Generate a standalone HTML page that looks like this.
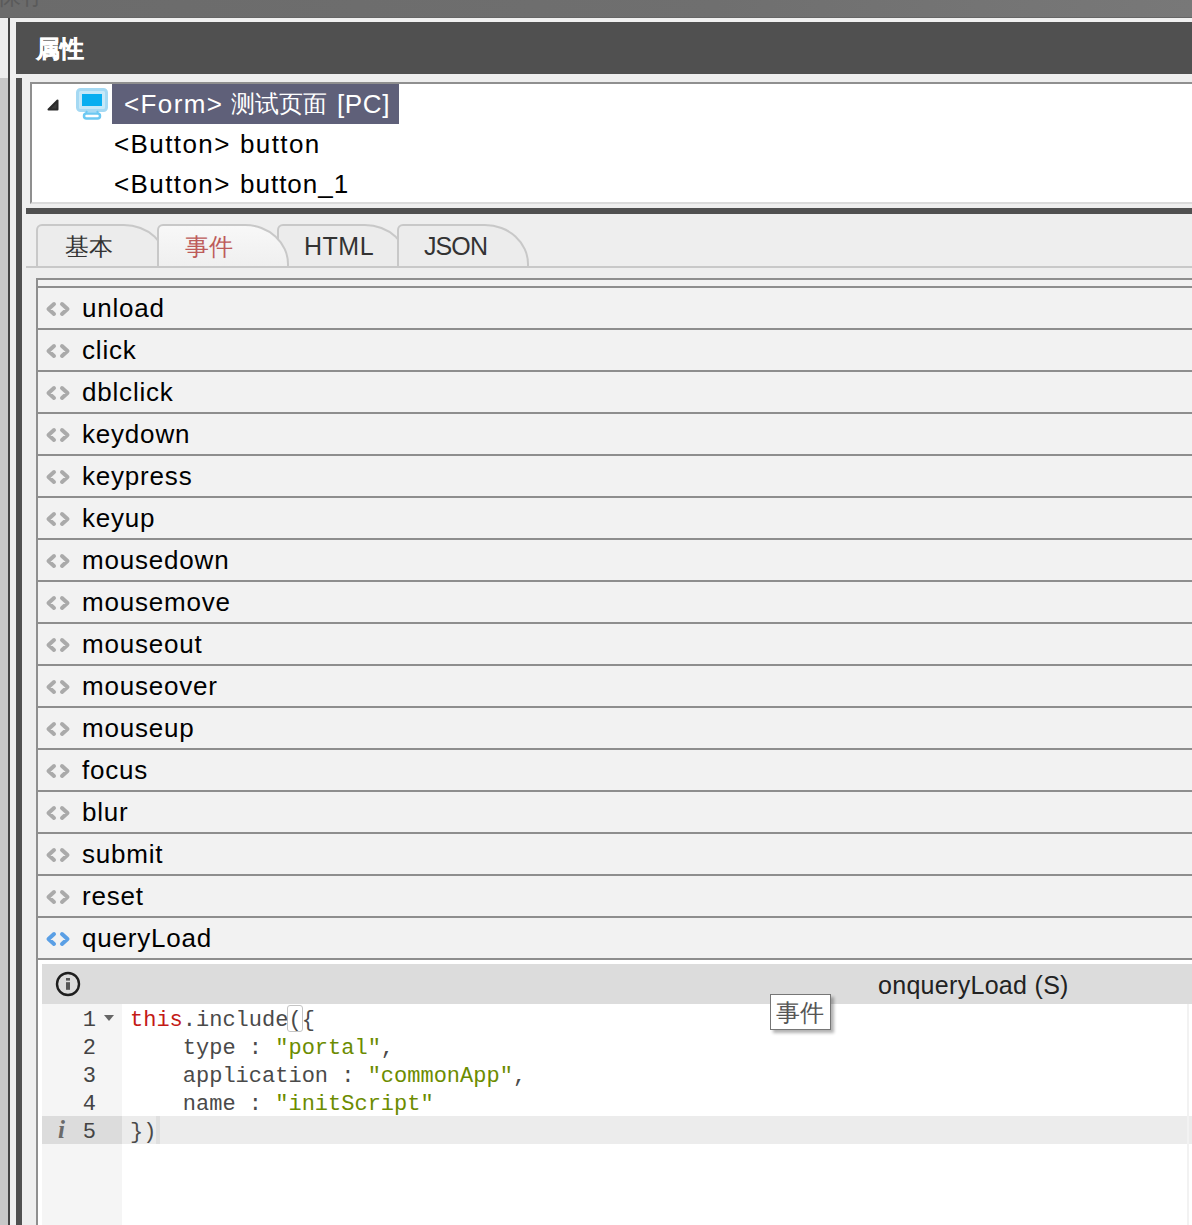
<!DOCTYPE html>
<html><head><meta charset="utf-8">
<style>
*{box-sizing:border-box}
html,body{margin:0;padding:0}
body{width:1192px;height:1225px;overflow:hidden;position:relative;background:#eeeeee;font-family:"Liberation Sans",sans-serif}
.a{position:absolute}
#topband{left:0;top:0;width:1192px;height:18px;border-bottom:1px solid #656565;background:linear-gradient(90deg,#6b6b6b 0%,#6f6f6f 60%,#787878 100%);overflow:hidden}
#topband span{position:absolute;left:-3px;top:-20px;font-size:24px;color:#5a5a5a}
.hdr{left:16px;top:22px;width:1176px;height:52px;background:#505050}
.hdr span{position:absolute;left:20px;top:12px;font-size:24px;font-weight:bold;color:#fff;line-height:30px;-webkit-text-stroke:0.35px #fff}
#tree{left:30px;top:82px;width:1200px;height:122px;background:#fff;border-top:2px solid #8f8f8f;border-left:2px solid #8f8f8f;border-bottom:2px solid #dadada}
.ti{position:absolute;font-size:26px;letter-spacing:1.4px;white-space:pre;line-height:40px;color:#000}
.ti.cj{font-size:24px;letter-spacing:0}
#sel{left:80px;top:0;width:287px;height:40px;background:#5f6079}
.tab{position:absolute;top:224px;height:43px;width:132px;border:2px solid #c8c8c8;border-bottom:none;border-radius:6px 44px 0 0 / 6px 40px 0 0;background:#ececec;font-size:24px;line-height:42px;padding-left:27px;color:#333}
.tab.act{background:linear-gradient(#f8f8f8,#efefef);color:#bd5b5a;z-index:5}
#tabline{left:26px;top:266px;width:1166px;height:2px;background:#c8c8c8;z-index:6}
#list{left:36px;top:278px;width:1200px;height:1000px;border-top:2px solid #8e8e8e;border-left:2px solid #8e8e8e;background:#f2f2f2}
.row{position:absolute;left:0;width:1200px;height:42px;border-top:2px solid #8e8e8e;background:#f2f2f2}
.row span{position:absolute;left:44px;top:0;font-size:26px;letter-spacing:0.8px;line-height:40px;color:#000}
.row svg{position:absolute;left:0;top:0}

#editor{left:38px;top:960px;width:1160px;height:265px;background:#fff}
.gut{position:absolute;left:4px;top:47px;width:54px;text-align:right;font-family:"Liberation Mono",monospace;font-size:22px;line-height:28px;color:#444}
.code{position:absolute;left:92px;top:47px;margin:0;font-family:"Liberation Mono",monospace;font-size:22px;line-height:28px;color:#4a4a4a}
.code .k{color:#c41a16}
.code .s{color:#6c8c00}

</style></head><body>
<div id="topband" class="a"><span>保存</span></div>
<!-- left strips -->
<div class="a" style="left:0;top:18px;width:8px;height:60px;background:#eeeeee"></div>
<div class="a" style="left:0;top:78px;width:8px;height:1147px;background:#c8c8c8"></div>
<div class="a" style="left:8px;top:18px;width:2px;height:1207px;background:#444"></div>
<div class="a" style="left:10px;top:18px;width:6px;height:1207px;background:#f0f0f0"></div>
<div class="a" style="left:16px;top:18px;width:1176px;height:4px;background:#f0f0f0"></div>
<div class="a hdr"><span>属性</span></div>
<div class="a" style="left:16px;top:78px;width:6px;height:1147px;background:#505050"></div>

<div id="tree" class="a">
  <svg class="a" style="left:13px;top:13px" width="16" height="16"><path d="M3.5 12.5L12.5 3.5V12.5Z" fill="#3a3a3a" stroke="#2a2a2a" stroke-width="2" stroke-linejoin="round"/></svg>
  <svg class="a" style="left:44px;top:2px" width="34" height="34" viewBox="0 0 34 34">
    <rect x="1.5" y="3.5" width="29" height="21" rx="3" fill="#c6e8f8" stroke="#a5d9f3" stroke-width="3"/>
    <rect x="6" y="8" width="20" height="12" fill="#08aef0"/>
    <path d="M11 25 L10 27" stroke="#6cc8f2" stroke-width="2"/><path d="M21 25 L22 27" stroke="#6cc8f2" stroke-width="2"/><rect x="8" y="27.5" width="16" height="5" rx="2.5" fill="#fff" stroke="#6cc8f2" stroke-width="2.5"/>
  </svg>
  <div id="sel" class="a"></div>
  <span class="ti" style="left:92px;top:0;color:#fff">&lt;Form&gt;</span>
  <span class="ti cj" style="left:199px;top:0;color:#fff">测试页面</span>
  <span class="ti" style="left:305px;top:0;color:#fff;letter-spacing:0.6px">[PC]</span>
  <span class="ti" style="left:82px;top:40px">&lt;Button&gt;</span>
  <span class="ti" style="left:208px;top:40px">button</span>
  <span class="ti" style="left:82px;top:80px">&lt;Button&gt;</span>
  <span class="ti" style="left:208px;top:80px;letter-spacing:1px">button_1</span>
</div>
<div class="a" style="left:26px;top:208px;width:1166px;height:6px;background:#505050"></div>

<div class="tab" style="left:36px;z-index:1">基本</div>
<div class="tab act" style="left:157px;padding-left:26px">事件</div>
<div class="tab" style="left:277px;z-index:3;padding-left:25px;letter-spacing:0.5px;font-size:25px;line-height:40px">HTML</div>
<div class="tab" style="left:397px;z-index:4;padding-left:25px;letter-spacing:-0.9px;font-size:25px;line-height:40px">JSON</div>
<div id="tabline" class="a"></div>

<div id="list" class="a">
<div class="row" style="top:6px"><svg width="40" height="40"><path d="M16 16L10.5 21L16 26M24 16L29.5 21L24 26" fill="none" stroke="#aaaaaa" stroke-width="4" stroke-linecap="round" stroke-linejoin="round"/></svg><span>unload</span></div>
<div class="row" style="top:48px"><svg width="40" height="40"><path d="M16 16L10.5 21L16 26M24 16L29.5 21L24 26" fill="none" stroke="#aaaaaa" stroke-width="4" stroke-linecap="round" stroke-linejoin="round"/></svg><span>click</span></div>
<div class="row" style="top:90px"><svg width="40" height="40"><path d="M16 16L10.5 21L16 26M24 16L29.5 21L24 26" fill="none" stroke="#aaaaaa" stroke-width="4" stroke-linecap="round" stroke-linejoin="round"/></svg><span>dblclick</span></div>
<div class="row" style="top:132px"><svg width="40" height="40"><path d="M16 16L10.5 21L16 26M24 16L29.5 21L24 26" fill="none" stroke="#aaaaaa" stroke-width="4" stroke-linecap="round" stroke-linejoin="round"/></svg><span>keydown</span></div>
<div class="row" style="top:174px"><svg width="40" height="40"><path d="M16 16L10.5 21L16 26M24 16L29.5 21L24 26" fill="none" stroke="#aaaaaa" stroke-width="4" stroke-linecap="round" stroke-linejoin="round"/></svg><span>keypress</span></div>
<div class="row" style="top:216px"><svg width="40" height="40"><path d="M16 16L10.5 21L16 26M24 16L29.5 21L24 26" fill="none" stroke="#aaaaaa" stroke-width="4" stroke-linecap="round" stroke-linejoin="round"/></svg><span>keyup</span></div>
<div class="row" style="top:258px"><svg width="40" height="40"><path d="M16 16L10.5 21L16 26M24 16L29.5 21L24 26" fill="none" stroke="#aaaaaa" stroke-width="4" stroke-linecap="round" stroke-linejoin="round"/></svg><span>mousedown</span></div>
<div class="row" style="top:300px"><svg width="40" height="40"><path d="M16 16L10.5 21L16 26M24 16L29.5 21L24 26" fill="none" stroke="#aaaaaa" stroke-width="4" stroke-linecap="round" stroke-linejoin="round"/></svg><span>mousemove</span></div>
<div class="row" style="top:342px"><svg width="40" height="40"><path d="M16 16L10.5 21L16 26M24 16L29.5 21L24 26" fill="none" stroke="#aaaaaa" stroke-width="4" stroke-linecap="round" stroke-linejoin="round"/></svg><span>mouseout</span></div>
<div class="row" style="top:384px"><svg width="40" height="40"><path d="M16 16L10.5 21L16 26M24 16L29.5 21L24 26" fill="none" stroke="#aaaaaa" stroke-width="4" stroke-linecap="round" stroke-linejoin="round"/></svg><span>mouseover</span></div>
<div class="row" style="top:426px"><svg width="40" height="40"><path d="M16 16L10.5 21L16 26M24 16L29.5 21L24 26" fill="none" stroke="#aaaaaa" stroke-width="4" stroke-linecap="round" stroke-linejoin="round"/></svg><span>mouseup</span></div>
<div class="row" style="top:468px"><svg width="40" height="40"><path d="M16 16L10.5 21L16 26M24 16L29.5 21L24 26" fill="none" stroke="#aaaaaa" stroke-width="4" stroke-linecap="round" stroke-linejoin="round"/></svg><span>focus</span></div>
<div class="row" style="top:510px"><svg width="40" height="40"><path d="M16 16L10.5 21L16 26M24 16L29.5 21L24 26" fill="none" stroke="#aaaaaa" stroke-width="4" stroke-linecap="round" stroke-linejoin="round"/></svg><span>blur</span></div>
<div class="row" style="top:552px"><svg width="40" height="40"><path d="M16 16L10.5 21L16 26M24 16L29.5 21L24 26" fill="none" stroke="#aaaaaa" stroke-width="4" stroke-linecap="round" stroke-linejoin="round"/></svg><span>submit</span></div>
<div class="row" style="top:594px"><svg width="40" height="40"><path d="M16 16L10.5 21L16 26M24 16L29.5 21L24 26" fill="none" stroke="#aaaaaa" stroke-width="4" stroke-linecap="round" stroke-linejoin="round"/></svg><span>reset</span></div>
<div class="row" style="top:636px"><svg width="40" height="40"><path d="M16 16L10.5 21L16 26M24 16L29.5 21L24 26" fill="none" stroke="#5a9fe5" stroke-width="4" stroke-linecap="round" stroke-linejoin="round"/></svg><span>queryLoad</span></div>
<div class="row" style="top:678px;background:#fff"></div>
</div>

<div id="editor" class="a">
  <div class="a" style="left:4px;top:4px;width:1200px;height:40px;background:#dcdcdc"></div>
  <svg class="a" style="left:17px;top:11px" width="26" height="26" viewBox="0 0 26 26">
    <circle cx="13" cy="13" r="11" fill="none" stroke="#1e1e1e" stroke-width="2.4"/>
    <rect x="11" y="7" width="4" height="2.6" fill="#555"/>
    <rect x="11" y="11.2" width="4" height="7.6" fill="#555"/>
  </svg>
  <div class="a" style="left:840px;top:5px;font-size:25px;letter-spacing:0.3px;line-height:40px;color:#222;white-space:pre">onqueryLoad (S)</div>
  <div class="a" style="left:4px;top:44px;width:80px;height:300px;background:#f5f5f5"></div>
  <div class="a" style="left:4px;top:156px;width:80px;height:28px;background:#dcdcdc"></div>
  <div class="a" style="left:84px;top:156px;width:1200px;height:28px;background:#ececec"></div>
  <div class="a" style="left:1149px;top:44px;width:2px;height:300px;background:#f2f2f2"></div>
  <div class="gut">1<br>2<br>3<br>4<br>5</div>
  <div class="a" style="left:66px;top:55px;width:0;height:0;border-left:5px solid transparent;border-right:5px solid transparent;border-top:6px solid #666"></div>
  <div class="a" style="left:20px;top:156px;font-family:'Liberation Serif',serif;font-style:italic;font-weight:bold;font-size:25px;line-height:28px;color:#6a6a6a">i</div>
  <div class="a" style="left:118px;top:156px;width:4px;height:28px;background:#e0e0e0"></div>
  <div class="a" style="left:249px;top:45px;width:16px;height:27px;border:1px solid #c4c4c4;border-radius:3px"></div>
  <pre class="code"><span class="k">this</span>.include({
    type : <span class="s">"portal"</span>,
    application : <span class="s">"commonApp"</span>,
    name : <span class="s">"initScript"</span>
})</pre>
  <div class="a" style="left:732px;top:34px;width:61px;height:36px;background:#fff;border:1px solid #767676;box-shadow:3px 3px 3px rgba(0,0,0,0.3);font-size:24px;line-height:36px;color:#555;padding-left:5px">事件</div>
</div>
</body></html>
